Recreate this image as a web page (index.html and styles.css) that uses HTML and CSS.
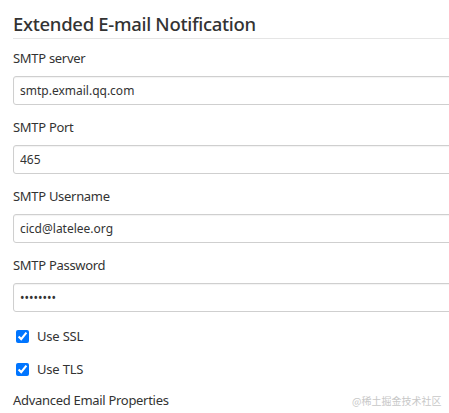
FILE: index.html
```html
<!DOCTYPE html>
<html>
<head>
<meta charset="utf-8">
<link rel="stylesheet" href="styles.css">
</head>
<body>
<div class="page">
  <h2 class="title">Extended E-mail Notification</h2>
  <div class="field">
    <label class="label">SMTP server</label>
    <input class="input" type="text" value="smtp.exmail.qq.com">
  </div>
  <div class="field">
    <label class="label">SMTP Port</label>
    <input class="input" type="text" value="465">
  </div>
  <div class="field">
    <label class="label">SMTP Username</label>
    <input class="input" type="text" value="cicd@latelee.org">
  </div>
  <div class="field">
    <label class="label">SMTP Password</label>
    <input class="input" type="password" value="12345678">
  </div>
  <label class="check"><input type="checkbox" checked> <span>Use SSL</span></label>
  <label class="check"><input type="checkbox" checked> <span>Use TLS</span></label>
  <div class="label adv">Advanced Email Properties</div>
</div>
<div class="watermark">@稀土掘金技术社区</div>
</body>
</html>
```
FILE: styles.css
```css
html, body {
  margin: 0;
  padding: 0;
  background: #fff;
  overflow: hidden;
}
body {
  font-family: "Noto Sans", "Open Sans", sans-serif;
  color: #333;
  width: 449px;
  height: 413px;
  position: relative;
}
.page {
  padding: 13px 0 0 13px;
  width: 470px;
}
.title {
  margin: 0 0 10px 0;
  font-size: 18.5px;
  line-height: 22px;
  font-weight: 500;
  letter-spacing: -0.3px;
  color: #333;
  padding-bottom: 3px;
  border-bottom: 1px solid #e5e5e5;
}
.field {
  display: flex;
  flex-direction: column;
  margin-bottom: 13px;
}
.label {
  font-size: 13px;
  line-height: 18px;
  letter-spacing: -0.3px;
  color: #333;
  margin-bottom: 9px;
}
.input {
  box-sizing: border-box;
  height: 29px;
  border: 1px solid #cfcfcf;
  border-radius: 3px;
  padding: 0 6px;
  font-family: "Noto Sans", "Open Sans", sans-serif;
  font-size: 12px;
  color: #333;
  box-shadow: inset 0 1px 1px rgba(0,0,0,0.05);
  width: 100%;
}
.check {
  display: flex;
  align-items: center;
  gap: 8px;
  font-size: 13px;
  line-height: 18px;
  letter-spacing: -0.2px;
  height: 22px;
  margin: 0 0 11px 0;
  padding-left: 3px;
}
.check input {
  margin: 0;
  width: 13px;
  height: 13px;
  accent-color: #0075ff;
}
.adv {
  margin: 0;
}
.watermark {
  position: absolute;
  left: 352px;
  top: 394px;
  font-size: 10px;
  line-height: 14px;
  color: #c8c8c8;
  font-family: "Noto Sans CJK SC", sans-serif;
}
```
